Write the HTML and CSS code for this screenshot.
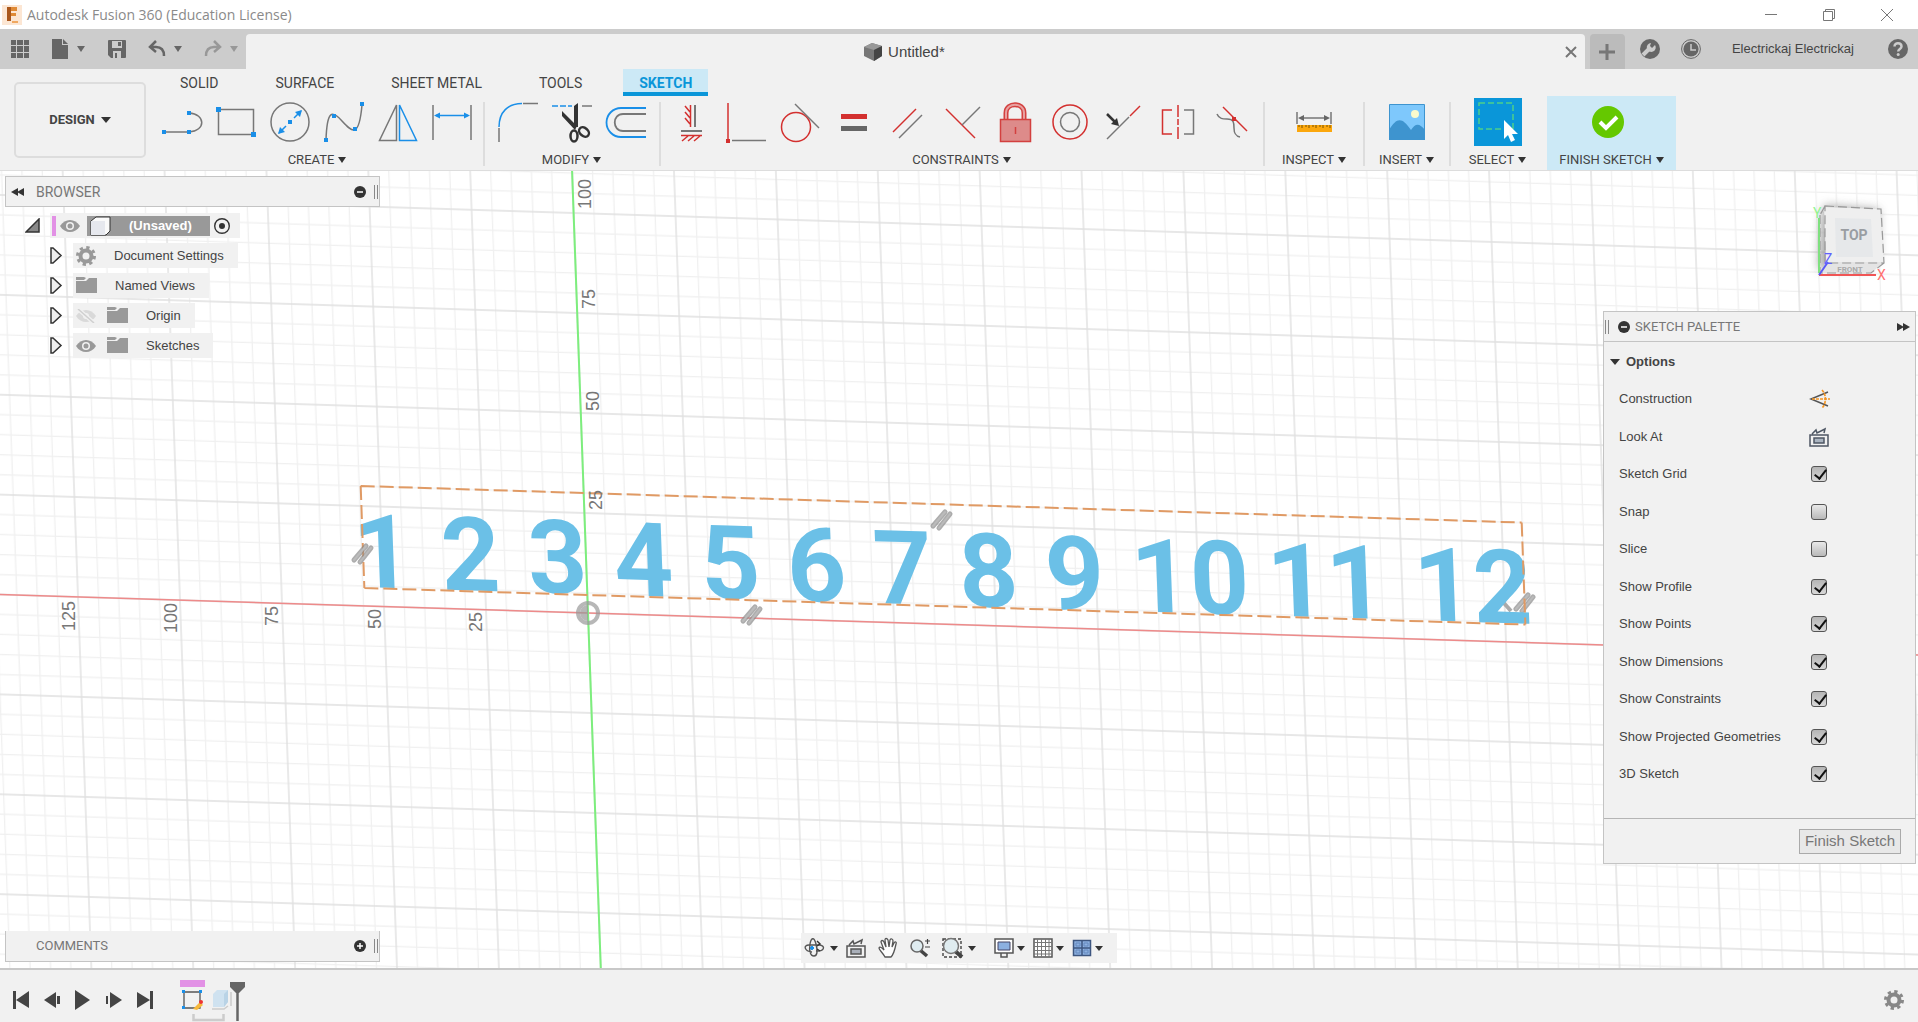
FILE: index.html
```html
<!DOCTYPE html>
<html lang="en">
<head>
<meta charset="utf-8">
<title>Autodesk Fusion 360 (Education License)</title>
<link rel="stylesheet" href="styles.css">
</head>
<body>
<header class="titlebar">
  <svg class="app-logo" width="20" height="20" viewBox="0 0 20 20"><rect width="20" height="20" fill="#fce6d3"/><path d="M5 2h10v4H9v2h5v3H9v5H5z" fill="#e08a35"/><path d="M5 2h4v14H5z" fill="#a9561b"/><path d="M10 17h6" stroke="#f0a860" stroke-width="2"/></svg>
  <h1 class="app-title">Autodesk Fusion 360 (Education License)</h1>
  <div class="window-buttons">
    <button class="bare" aria-label="Minimize"><svg width="14" height="14"><path d="M1 6.500h12" stroke="#777"/></svg></button>
    <button class="bare" aria-label="Restore"><svg width="14" height="14" fill="none" stroke="#777"><path d="M1.500 3.500h9v9h-9zM3.500 3V1.500h9v9H11"/></svg></button>
    <button class="bare" aria-label="Close window"><svg width="14" height="14"><path d="M1 1l12 12M13 1L1 13" stroke="#777"/></svg></button>
  </div>
</header>

<nav class="appbar" aria-label="Application bar">
  <div class="quick">
    <button class="bare" aria-label="Data panel"><svg width="18" height="18" fill="#666"><path d="M0 0h5v5H0zM6 0h6v5H6zM13 0h5v5h-5zM0 6h5v6H0zM6 6h6v6H6zM13 6h5v6h-5zM0 13h5v5H0zM6 13h6v5H6zM13 13h5v5h-5z"/></svg></button>
    <button class="bare menu" aria-label="File"><svg width="18" height="20"><path d="M1 0h10v6h6v14H1z" fill="#666"/><path d="M12 0l5 5h-5z" fill="#666"/></svg><i class="caret"></i></button>
    <button class="bare" aria-label="Save"><svg width="18" height="18" fill="#666"><path d="M0 1a1 1 0 0 1 1-1h16a1 1 0 0 1 1 1v16a1 1 0 0 1-1 1H3l-3-3z"/><path d="M4 1h10v7H4zM5 11h8v7H5z" fill="#ccc"/><path d="M10 2h3v4h-3zM7 13h2v5H7z"/></svg></button>
    <button class="bare menu" aria-label="Undo"><svg width="18" height="18" fill="none" stroke="#666" stroke-width="2.500"><path d="M8 1L2 7l6 5M2 7h6c5 0 8 3 8 9"/></svg><i class="caret"></i></button>
    <button class="bare menu faded" aria-label="Redo"><svg width="18" height="18" fill="none" stroke="#666" stroke-width="2.500"><path d="M10 1l6 6-6 5M16 7h-6c-5 0-8 3-8 9"/></svg><i class="caret"></i></button>
  </div>
  <div class="doc-tab">
    <span class="doc-name"><svg width="18" height="18"><path d="M0 4l8-4 10 3v10l-8 5-10-5z" fill="#777"/><path d="M0 4l8-4 10 3-8 4z" fill="#999"/><path d="M10 7l8-4v10l-8 5z" fill="#444"/></svg>Untitled*</span>
    <button class="bare" aria-label="Close tab"><svg width="12" height="12"><path d="M1 1l10 10M11 1L1 11" stroke="#777" stroke-width="2"/></svg></button>
  </div>
  <button class="new-tab" aria-label="New tab"><svg width="16" height="16"><path d="M8 0v16M0 8h16" stroke="#777" stroke-width="3"/></svg></button>
  <div class="account">
    <button class="bare" aria-label="Extensions"><svg width="20" height="20"><circle cx="10" cy="10" r="10" fill="#666"/><path d="M3 16l6-6" stroke="#ccc" stroke-width="4"/><path d="M15 6a4.500 4.500 0 1 1-4-2l-1 3 2 2z" fill="#ccc"/></svg></button>
    <button class="bare" aria-label="Job status"><svg width="20" height="20"><circle cx="10" cy="10" r="9.400" fill="none" stroke="#666"/><circle cx="10" cy="10" r="7.600" fill="#666"/><path d="M10 5v6h5" fill="none" stroke="#ccc" stroke-width="1.500"/></svg></button>
    <button class="bare user">Electrickaj Electrickaj</button>
    <button class="bare" aria-label="Help"><svg width="20" height="20"><circle cx="10" cy="10" r="10" fill="#666"/><path d="M6.500 7.500C6.500 3 13.500 3.500 13.500 7.500c0 2.500-3.300 2.500-3.300 5" fill="none" stroke="#ccc" stroke-width="2.500"/><circle cx="10.200" cy="15.500" r="1.500" fill="#ccc"/></svg></button>
  </div>
</nav>

<section class="ribbon" aria-label="Ribbon">
  <button class="workspace">DESIGN <i class="caret"></i></button>
  <div class="ribbon-main">
    <div class="tabs">
      <button class="tab">SOLID</button><button class="tab">SURFACE</button><button class="tab">SHEET METAL</button><button class="tab">TOOLS</button><button class="tab active">SKETCH</button>
    </div>
    <div class="groups">
      <div class="group create">
        <div class="icons">
          <button class="tool" aria-label="Line"><svg class="ic"><path d="M1 30h26c17-1 17-18 0-19" fill="none" stroke="#777" stroke-width="1.500"/><path d="M0 28h4v4H0zM25 28h4v4h-4zM25 9h4v4h-4z" fill="#1a8fe8"/></svg></button>
          <button class="tool" aria-label="Rectangle"><svg class="ic"><path d="M2.500 7.500h35v25h-35z" fill="none" stroke="#777" stroke-width="1.500"/><path d="M0 5h5v5H0zM35 30h5v5h-5z" fill="#1a8fe8"/></svg></button>
          <button class="tool" aria-label="Circle"><svg class="ic"><circle cx="20" cy="20" r="19" fill="none" stroke="#777" stroke-width="1.500"/><path d="M9 31l7-7M24 16l7-7" stroke="#1a8fe8" stroke-width="1.500"/><path d="M18 18h4v4h-4zM32 8l-2 7-5-5zM8 32l2-7 5 5z" fill="#1a8fe8"/></svg></button>
          <button class="tool" aria-label="Spline"><svg class="ic"><path d="M2 38C3 8 8 8 18 19s17 18 20-16" fill="none" stroke="#777" stroke-width="1.500"/><path d="M0 36h4v4H0zM8 12h4v4H8zM29 25h4v4h-4zM36 0h4v4h-4z" fill="#1a8fe8"/></svg></button>
          <button class="tool" aria-label="Mirror"><svg class="ic" fill="none" stroke-width="1.500"><path d="M18.500 3v35.500H1.500z" stroke="#777"/><path d="M21.500 3v35.500h17z" stroke="#1a8fe8"/></svg></button>
          <button class="tool" aria-label="Sketch Dimension"><svg class="ic"><path d="M1 3v35M39 3v35" stroke="#777" stroke-width="1.500"/><path d="M4 13.500h32" stroke="#1a8fe8" stroke-width="1.500"/><path d="M2 13.500l6-3v6zM38 13.500l-6-3v6z" fill="#1a8fe8"/></svg></button>
        </div>
        <button class="group-label">CREATE <i class="caret"></i></button>
      </div>
      <div class="group modify">
        <div class="icons">
          <button class="tool" aria-label="Fillet"><svg class="ic" fill="none" stroke-width="1.500"><path d="M1 25C1 10 10 1.500 24 1.500" stroke="#1a8fe8"/><path d="M25 1.500h15M1 26v14" stroke="#777"/></svg></button>
          <button class="tool" aria-label="Trim"><svg class="ic"><path d="M0 4h20" stroke="#1a8fe8" stroke-width="1.500" stroke-dasharray="6 2"/><path d="M30 4h10" stroke="#777" stroke-width="1.500"/><path d="M22 4l4-3v24h-4zM10 9l15 15-2 4-13-14z" fill="#333"/><ellipse cx="22" cy="34" rx="3.500" ry="5.500" fill="none" stroke="#333" stroke-width="2.500"/><ellipse cx="32" cy="30" rx="4" ry="5.500" transform="rotate(-50 32 30)" fill="none" stroke="#333" stroke-width="2.500"/></svg></button>
          <button class="tool" aria-label="Offset"><svg class="ic" fill="none" stroke-width="1.800"><path d="M40 6H15a14 14 0 0 0 0 29h25" stroke="#1a8fe8"/><path d="M40 12H17c-11 0-11 17 0 17h23" stroke="#777"/></svg></button>
        </div>
        <button class="group-label">MODIFY <i class="caret"></i></button>
      </div>
      <div class="group constraints">
        <div class="icons">
          <button class="tool" aria-label="Horizontal/Vertical"><svg class="ic" fill="none" stroke="#d3302f" stroke-width="1.500"><path d="M18.500 3v22M13 4l5 6M13 10l5 6M13 16l5 6M9 33.500h21M16 34l-6 5M22 34l-6 5M28 34l-6 5"/><path d="M23 3v22M9 29h21" stroke="#777" stroke-width="2"/></svg></button>
          <button class="tool" aria-label="Coincident"><svg class="ic"><path d="M2 1v36" stroke="#d3302f" stroke-width="1.500"/><path d="M6 38.500h34" stroke="#777" stroke-width="1.500"/><path d="M0 37h4v4H0z" fill="#d3302f"/></svg></button>
          <button class="tool" aria-label="Tangent"><svg class="ic" fill="none"><circle cx="16" cy="25" r="14.500" stroke="#d3302f" stroke-width="1.500"/><path d="M15 2l24 24" stroke="#777" stroke-width="1.500"/></svg></button>
          <button class="tool" aria-label="Equal"><svg class="ic"><path d="M7 12h26v5H7z" fill="#d3302f"/><path d="M7 24h26v5H7z" fill="#666"/></svg></button>
          <button class="tool" aria-label="Parallel"><svg class="ic" stroke-width="1.500"><path d="M5 30L28 7" stroke="#d3302f"/><path d="M11 36l23-23" stroke="#777"/></svg></button>
          <button class="tool" aria-label="Perpendicular"><svg class="ic" stroke-width="1.500"><path d="M4 7l29 29" stroke="#d3302f"/><path d="M20 23L38 5" stroke="#777"/></svg></button>
          <button class="tool" aria-label="Fix"><svg class="ic" fill="none" stroke="#d3403f"><path d="M10 17v-6c0-11 18-11 18 0v6" stroke-width="5"/><path d="M10 17v-6c0-11 18-11 18 0v6" stroke="#e8a0a0" stroke-width="2"/><path d="M4.500 17.500h30v22h-30z" fill="#dd8b8a" stroke-width="1.500"/><path d="M19.500 25v7" stroke-width="1.500"/></svg></button>
          <button class="tool" aria-label="Concentric"><svg class="ic" fill="none" stroke-width="1.500"><circle cx="20" cy="20" r="17" stroke="#d3302f"/><circle cx="20" cy="20" r="9.500" stroke="#777"/></svg></button>
          <button class="tool" aria-label="Collinear"><svg class="ic"><path d="M3 37l22-22" stroke="#777" stroke-width="1.500"/><path d="M26 14L36 4" stroke="#d3302f" stroke-width="1.500"/><path d="M3 12l8 8" stroke="#333" stroke-width="2.500"/><path d="M15 24l-2-8-6 6z" fill="#333"/></svg></button>
          <button class="tool" aria-label="Symmetry"><svg class="ic" fill="none" stroke="#d3302f" stroke-width="1.500"><path d="M14 8H4.500v24H14"/><path d="M20 3v12M20 17v6M20 25v12"/><path d="M26 8h9.500v24H26" stroke="#777"/></svg></button>
          <button class="tool" aria-label="Curvature"><svg class="ic" fill="none"><path d="M5 12c2 5 6 5 10 5 7 0 7 4 7 9 0 6 2 8 6 9" stroke="#777" stroke-width="1.500"/><path d="M11 5l24 24" stroke="#d3302f" stroke-width="1.500"/><path d="M20 15h4v4h-4z" fill="#d3302f"/></svg></button>
        </div>
        <button class="group-label">CONSTRAINTS <i class="caret"></i></button>
      </div>
      <div class="group inspect">
        <div class="icons"><button class="tool" aria-label="Measure"><svg class="ic"><path d="M3 10v12M37 10v12M6 16h28" stroke="#777" stroke-width="1.500"/><path d="M4 16l6-3v6zM36 16l-6-3v6z" fill="#666"/><path d="M3 23h35v7H3z" fill="#fba70d"/><path d="M5 23v2M8 23v3M12 23v2M15 23v3M19 23v2M22 23v3M26 23v2M29 23v3M33 23v2M36 23v3" stroke="#7a5200"/></svg></button></div>
        <button class="group-label">INSPECT <i class="caret"></i></button>
      </div>
      <div class="group insert">
        <div class="icons"><button class="tool" aria-label="Insert image"><svg class="ic"><path d="M2.500 2.500h35v35h-35z" fill="#7ec8fc" stroke="#3e94cf"/><path d="M2 28c8-13 13-13 22 0 5-8 9-6 14 0v10H2z" fill="#3e94cf"/><circle cx="28" cy="12" r="4" fill="#fbfbcd"/></svg></button></div>
        <button class="group-label">INSERT <i class="caret"></i></button>
      </div>
      <div class="group select">
        <div class="icons"><button class="tool selected" aria-label="Select"><svg width="48" height="48"><path d="M5 5h34v26H5z" fill="none" stroke="#4ed08a" stroke-width="1.500" stroke-dasharray="6 3"/><path d="M30 22v19l4-4 3 7 4-2-3-6h6z" fill="#fff"/></svg></button></div>
        <button class="group-label">SELECT <i class="caret"></i></button>
      </div>
      <div class="group finish">
        <div class="icons"><button class="tool" aria-label="Finish"><svg class="ic"><circle cx="20" cy="20" r="16" fill="#65c800"/><path d="M12 20l6 6 11-11" fill="none" stroke="#fff" stroke-width="4"/></svg></button></div>
        <button class="group-label">FINISH SKETCH <i class="caret"></i></button>
      </div>
    </div>
  </div>
</section>

<main class="viewport">
  <svg class="scene" aria-label="Sketch canvas">
    <defs>
      <pattern id="grid" width="102" height="100" patternUnits="userSpaceOnUse">
        <path d="M20.400 0v100M40.800 0v100M61.200 0v100M81.600 0v100M0 20h102M0 40h102M0 60h102M0 80h102" stroke="#f0f0f0" stroke-width="1.300"/>
        <path d="M0 0v100M102 0v100M0 0h102M0 100h102" stroke="#e0e0e0" stroke-width="1.400"/>
      </pattern>
      <g id="parallel"><path d="M-8 6L4 -8M-2 8L9 -6" stroke="#8a8a8a" stroke-opacity=".7" stroke-width="5" stroke-linecap="round"/><path d="M-8 6L4 -8M-2 8L9 -6" stroke="#bbb" stroke-width="2" stroke-linecap="round"/></g>
    </defs>
    <g transform="matrix(1 .0315 .036 1 588 442)">
      <rect x="-800" y="-600" width="4000" height="3000" fill="url(#grid)"/>
      <path d="M-700 0H3000" stroke="#ee8a8a" stroke-width="1.500"/>
      <path d="M0 -600V2000" stroke="#7dee7d" stroke-width="2"/>
    </g>
    <use href="#parallel" x="1524" y="432"/><path d="M1503 431l8 9" stroke="#aaa" stroke-width="4"/>
    <g transform="matrix(1 .0315 .036 1 588 442)">
      <g class="numbers">
        <text x="-174" y="-19">1</text><text x="-86" y="-19">2</text><text x="1" y="-19">3</text><text x="87" y="-19">4</text><text x="174" y="-19">5</text><text x="260" y="-19">6</text><text x="346" y="-19">7</text><text x="432" y="-19">8</text><text x="518" y="-19">9</text><text x="663" y="-19">10</text><text x="799" y="-19">11</text><text x="946" y="-19">12</text>
      </g>
      <path d="M-223 -120H938M-223 -18H938M-223 -120V-18M938 -120V-18" fill="none" stroke="#e09a64" stroke-width="2" stroke-dasharray="14 5"/>
    </g>
    <g class="axis">
      <text transform="translate(75 445) rotate(-90)">125</text><text transform="translate(177 447) rotate(-90)">100</text><text transform="translate(278 445) rotate(-90)">75</text><text transform="translate(381 448) rotate(-90)">50</text><text transform="translate(482 451) rotate(-90)">25</text>
      <text transform="translate(602 329) rotate(-90)">25</text><text transform="translate(599 230) rotate(-90)">50</text><text transform="translate(595 128) rotate(-90)">75</text><text transform="translate(591 23) rotate(-90)">100</text>
    </g>
    <circle cx="588" cy="442" r="10" fill="none" stroke="#999" stroke-opacity=".7" stroke-width="4"/><path d="M588 434a8 8 0 0 0 0 16z" fill="#999" fill-opacity=".7"/>
    <use href="#parallel" x="362" y="383"/><use href="#parallel" x="941" y="349"/><use href="#parallel" x="751" y="444"/>
  </svg>

  <svg class="cube" width="80" height="84" aria-label="View cube">
    <path d="M9 15L6 68l50 1 11-13V8L13 4z" fill="#8a8a8a" opacity=".7" class="cube-shadow"/>
    <path d="M12 6l56 2 4 54-58-1z" fill="#efefef"/><path d="M14 61h58l-13 11-50-1z" fill="#e4e4e4"/><path d="M23 17l36 1 2 38H24z" fill="#e6e8ea"/>
    <path d="M13 5l56 3 3 54H13zM13 5L8 14M8 14v58h51l13-10" fill="none" stroke="#999" stroke-width="1.200" stroke-dasharray="9 4"/>
    <path d="M7 17v55" stroke="#7fe07f" stroke-width="2"/><path d="M7 74h57" stroke="#f05555" stroke-width="2"/><path d="M7 74l9-13" stroke="#5a5af5" stroke-width="2"/>
    <text class="face" x="42" y="39">TOP</text><text class="front" x="38" y="71">FRONT</text>
    <text class="ax" x="1" y="17" fill="#90f590">Y</text><text class="ax" x="65" y="79" fill="#ff7070">X</text><text class="ax" x="12" y="63" fill="#6060ff">Z</text>
  </svg>

  <div class="left-column">
    <section class="browser">
      <header class="panel-head"><button class="bare" aria-label="Collapse browser"><svg width="14" height="8"><path d="M0 4l7-4v8zM6 4l7-4v8z" fill="#333"/></svg></button><h2>BROWSER</h2><button class="bare" aria-label="Hide"><svg class="dot"><circle cx="6" cy="6" r="6" fill="#333"/><path d="M3 6h6" stroke="#fff" stroke-width="1.500"/></svg></button><i class="grip"></i></header>
      <ul class="tree">
        <li class="root"><svg width="16" height="16"><path d="M1 14L14 1v13z" fill="#888" stroke="#333" stroke-width="1.500"/></svg>
          <div class="node"><i class="mark"></i><svg class="eye"><path d="M0 7c5-8 15-8 20 0-5 8-15 8-20 0z" fill="#999"/><circle cx="10" cy="7" r="4" fill="#f1f1f1"/><circle cx="10" cy="7" r="2.500" fill="#999"/></svg><span class="doc"><svg width="22" height="20"><path d="M1 5l5-4h14v14l-4 4H1z" fill="#fafafa" stroke="#333"/><path d="M1 5h14v14H1z" fill="#e6e8ee"/></svg>(Unsaved)</span><svg width="16" height="16"><circle cx="8" cy="8" r="7.300" fill="none" stroke="#333" stroke-width="1.400"/><circle cx="8" cy="8" r="3" fill="#333"/></svg></div></li>
        <li><svg class="twist"><path d="M1 1v15h2l8-7.500L3 1z" fill="#eee" stroke="#333" stroke-width="1.500"/></svg><div class="node"><svg class="gear" viewBox="0 0 20 20"><circle cx="10" cy="10" r="5.500" fill="none" stroke="#999" stroke-width="4"/><circle cx="10" cy="10" r="8.500" fill="none" stroke="#999" stroke-width="3" stroke-dasharray="3.300 3.375"/></svg><span>Document Settings</span></div></li>
        <li><svg class="twist"><path d="M1 1v15h2l8-7.500L3 1z" fill="#eee" stroke="#333" stroke-width="1.500"/></svg><div class="node"><svg class="folder"><path d="M0 0h8l2 1-2 2H0zM0 4h10l3-3h8v15H0z" fill="#999"/></svg><span>Named Views</span></div></li>
        <li><svg class="twist"><path d="M1 1v15h2l8-7.500L3 1z" fill="#eee" stroke="#333" stroke-width="1.500"/></svg><div class="node"><svg class="eye"><path d="M0 7c5-8 15-8 20 0-5 8-15 8-20 0z" fill="#d9d9d9"/><circle cx="10" cy="7" r="3" fill="#f1f1f1"/><path d="M2 0l16 14" stroke="#f1f1f1" stroke-width="4"/><path d="M2 0l16 14" stroke="#d0d0d0" stroke-width="1.500"/></svg><svg class="folder second"><path d="M0 0h8l2 1-2 2H0zM0 4h10l3-3h8v15H0z" fill="#999"/></svg><span>Origin</span></div></li>
        <li><svg class="twist"><path d="M1 1v15h2l8-7.500L3 1z" fill="#eee" stroke="#333" stroke-width="1.500"/></svg><div class="node"><svg class="eye"><path d="M0 7c5-8 15-8 20 0-5 8-15 8-20 0z" fill="#999"/><circle cx="10" cy="7" r="4" fill="#f1f1f1"/><circle cx="10" cy="7" r="2.500" fill="#999"/></svg><svg class="folder second"><path d="M0 0h8l2 1-2 2H0zM0 4h10l3-3h8v15H0z" fill="#999"/></svg><span>Sketches</span></div></li>
      </ul>
    </section>
    <section class="panel-head comments"><h2>COMMENTS</h2><button class="bare" aria-label="Add comment"><svg class="dot"><circle cx="6" cy="6" r="6" fill="#333"/><path d="M3 6h6M6 3v6" stroke="#fff" stroke-width="1.500"/></svg></button><i class="grip"></i></section>
  </div>

  <nav class="navbar" aria-label="Navigation">
    <button class="bare menu" aria-label="Orbit"><svg class="nav" fill="none" stroke="#555" stroke-width="1.400"><path d="M8 14C0 13-1 7 5 7h11c6 1 4 7-4 6M10 18C6 18 5 12 6 6s4-8 6 0 1 12-2 12"/><path d="M6 10h4M8 8v4" stroke="#1a8fe8" stroke-width="2"/><path d="M13 3l3 3-3 2M16 13l-3-2" stroke="#333"/></svg><i class="caret"></i></button>
    <button class="bare look" aria-label="Look At"><svg class="nav" fill="none" stroke="#555" stroke-width="1.500"><path d="M1 8h18v11H1zM3 7l4-4 1 3 8-4-1 4" /><path d="M5 11h10v5H5z" fill="#aab0ba"/></svg></button>
    <button class="bare" aria-label="Pan"><svg class="nav"><path d="M7 19C5 15 1 12 1 10c1-2 3 0 5 2L3 4c0-2 2-2 3 0l2 5-1-7c0-2 2-2 3 0l1 7 1-7c1-2 3-1 3 1l-1 6 2-4c1-2 3-1 2 1-1 5-2 10-5 13z" fill="#fdfdfd" stroke="#555" stroke-width="1.300"/></svg></button>
    <button class="bare" aria-label="Zoom"><svg class="nav" fill="none"><path d="M10 12l7 6" stroke="#444" stroke-width="3.500"/><circle cx="7" cy="8" r="6" fill="#dfecf0" stroke="#666" stroke-width="1.500"/><path d="M15 3h5M17.500 1v5M15 9h5" stroke="#444" stroke-width="1.200"/></svg></button>
    <button class="bare menu" aria-label="Fit"><svg class="nav" fill="none"><path d="M1 1h18v18H1z" stroke="#444" stroke-width="1.400" stroke-dasharray="3 2"/><path d="M13 13l7 6" stroke="#444" stroke-width="4"/><circle cx="9" cy="8" r="7.500" fill="#dfecf0" stroke="#777" stroke-width="1.500"/></svg><i class="caret"></i></button>
    <div class="display">
      <button class="bare menu" aria-label="Display settings"><svg class="nav" fill="none"><path d="M1 1h18v14H1z" fill="#fff" stroke="#555" stroke-width="1.500"/><path d="M4 4h12v8H4z" fill="#8cb0e0" stroke="#446"/><path d="M7 15v4h6v-4" stroke="#555" stroke-width="1.500"/></svg><i class="caret"></i></button>
      <button class="bare menu" aria-label="Grid and snaps"><svg class="nav" fill="none"><path d="M1 1h18v18H1z" fill="#fff" stroke="#555" stroke-width="1.500"/><path d="M4.500 1v18M8.500 1v18M12.500 1v18M16 1v18M1 4.500h18M1 8.500h18M1 12.500h18M1 16h18" stroke="#777"/></svg><i class="caret"></i></button>
      <button class="bare menu" aria-label="Viewports"><svg class="nav"><path d="M1.500 2.500h17v15h-17zM10 2v16M1 10h18" fill="#8cb0e0" stroke="#3d5680" stroke-width="1.500"/><path d="M4 5h4v3H4zM12 5h4v3h-4zM4 12h4v3H4zM12 12h4v3h-4z" fill="none" stroke="#6488bd"/></svg><i class="caret"></i></button>
    </div>
  </nav>

  <aside class="palette">
    <header class="palette-head"><i class="grip flip"></i><button class="bare" aria-label="Minimize palette"><svg class="dot"><circle cx="6" cy="6" r="6" fill="#333"/><path d="M3 6h6" stroke="#fff" stroke-width="1.500"/></svg></button><h2>SKETCH PALETTE</h2><button class="bare" aria-label="Dock palette"><svg width="14" height="8"><path d="M0 0l7 4-7 4zM6 0l7 4-7 4z" fill="#333"/></svg></button></header>
    <div class="rows">
      <button class="bare options"><i class="caret"></i>Options</button>
      <div class="row"><span>Construction</span><button class="bare" aria-label="Construction"><svg class="nav" fill="none"><path d="M19 3L2 10l17 7" stroke="#555" stroke-width="1.500"/><path d="M3 10h18M13 1c4 4 5 13 0 18" stroke="#f59522" stroke-width="1.700" stroke-dasharray="3 1"/></svg></button></div>
      <div class="row"><span>Look At</span><button class="bare" aria-label="Look at sketch"><svg class="nav" fill="none" stroke="#4d5663" stroke-width="1.500"><path d="M1 8h18v11H1zM3 7l4-4 1 3 8-4-1 4" /><path d="M5 11h10v5H5z" fill="#aab4c0"/></svg></button></div>
      <label class="row">Sketch Grid<input type="checkbox" checked></label>
      <label class="row">Snap<input type="checkbox"></label>
      <label class="row">Slice<input type="checkbox"></label>
      <label class="row">Show Profile<input type="checkbox" checked></label>
      <label class="row">Show Points<input type="checkbox" checked></label>
      <label class="row">Show Dimensions<input type="checkbox" checked></label>
      <label class="row">Show Constraints<input type="checkbox" checked></label>
      <label class="row">Show Projected Geometries<input type="checkbox" checked></label>
      <label class="row">3D Sketch<input type="checkbox" checked></label>
    </div>
    <footer class="palette-foot"><button class="finish-btn">Finish Sketch</button></footer>
  </aside>
</main>

<footer class="timeline">
  <button class="bare" aria-label="Go to start"><svg class="play"><path d="M0 1h3v18H0zM16 1v17L3 10z"/></svg></button>
  <button class="bare" aria-label="Step back"><svg class="play"><path d="M0 10L12 2v16zM13 6h3v8h-3z"/></svg></button>
  <button class="bare" aria-label="Play"><svg class="play"><path d="M0 0l15 10L0 20z"/></svg></button>
  <button class="bare" aria-label="Step forward"><svg class="play"><path d="M0 6h2v8H0zM4 2l12 8-12 8z"/></svg></button>
  <button class="bare" aria-label="Go to end"><svg class="play"><path d="M0 2l13 8-13 8zM13 1h3v18h-3z"/></svg></button>
  <svg class="history" width="70" height="46" aria-label="Feature history"><path d="M0 4h25v7H0z" fill="#e291e5"/><path d="M4 16h16v16H4z" fill="none" stroke="#555" stroke-width="1.300"/><path d="M2 14h3v3H2zM19 14h3v3h-3zM2 30h3v3H2z" fill="#1a8fe8"/><path d="M13 33l7-7 3 3-6 5z" fill="#f6b83c"/><circle cx="21" cy="26" r="2" fill="#e33"/><path d="M33 18l4-4h11v12l-4 5H33z" fill="#cfe2f0"/><path d="M44 31V18l4-4v12z" fill="#b9d3e6"/><path d="M32 33h12l4-3M51 30V16" fill="none" stroke="#ccc" stroke-width="1.500"/><path d="M13.500 38v6h30v-6" fill="none" stroke="#ccc" stroke-width="2.500"/><path d="M50 6h15v5l-6 6h-3l-6-6z" fill="#666"/><path d="M57.500 12v33" stroke="#666" stroke-width="2.500"/></svg>
  <button class="bare settings" aria-label="Timeline settings"><svg class="gear" viewBox="0 0 20 20"><circle cx="10" cy="10" r="5.500" fill="none" stroke="#888" stroke-width="4"/><circle cx="10" cy="10" r="8.500" fill="none" stroke="#888" stroke-width="3" stroke-dasharray="3.300 3.375"/></svg></button>
</footer>
</body>
</html>
```
FILE: styles.css
```css
* { box-sizing: border-box; }
html, body { height: 100%; }
body {
  margin: 0;
  display: flex;
  flex-direction: column;
  overflow: hidden;
  background: #f1f1f1;
  color: #444;
  font: 13px/16px "Liberation Sans", Arial, sans-serif;
}
button { font: inherit; color: inherit; }
svg { display: block; flex: none; }
h1, h2 { margin: 0; font-weight: normal; }
.bare { border: 0; padding: 0; background: none; display: flex; align-items: center; }
.menu { gap: 8px; }
.caret { display: inline-block; border: 5px solid transparent; border-top: 6px solid #333; border-bottom: 0; }
.titlebar { flex: none; height: 29px; background: #fff; display: flex; align-items: center; padding: 0 23px 0 2px; gap: 5px; }
.app-title { font: 14px/20px "Open Sans", sans-serif; color: #8a8a8a; }
.window-buttons { margin-left: auto; display: flex; gap: 44px; padding-right: 1px; }

.appbar { flex: none; height: 40px; background: #ccc; display: flex; align-items: stretch; }
.quick { width: 246px; display: flex; align-items: center; justify-content: space-between; padding: 0 8px 0 11px; }
.quick .caret { border-width: 6px 4px 0; border-top-color: #666; }
.faded { opacity: .5; }
.doc-tab { flex: 1; margin-top: 5px; background: #f1f1f1; border-radius: 4px 4px 0 0; display: flex; align-items: center; padding: 0 8px; }
.doc-name { flex: 1; display: flex; align-items: center; justify-content: center; gap: 6px; padding-right: 10px; font-size: 15px; }
.new-tab { width: 35px; margin: 5px 0 0 5px; border: 0; border-radius: 4px 4px 0 0; background: #bbb; display: grid; place-items: center; padding: 0; }
.account { display: flex; align-items: center; gap: 21px; padding: 0 10px 0 15px; }
.user { margin: 0 13px 0 10px; }

.ribbon { flex: none; display: flex; height: 102px; border-bottom: 1px solid #ddd; font: 13px/16px Roboto, sans-serif; }
.workspace { width: 132px; height: 76px; margin: 13px 10px 0 14px; background: none; border: 2px solid #ddd; border-radius: 5px; font-weight: 700; display: flex; align-items: center; justify-content: center; gap: 6px; }
.ribbon-main { flex: 1; display: flex; flex-direction: column; }
.tabs { display: flex; height: 27px; gap: 25px; padding-left: 8px; }
.tab { border: 0; background: none; padding: 4px 16px 0; border-bottom: 4px solid transparent; font-size: 14px; }
.tab.active { background: #cce9f6; border-color: #0a96d9; color: #0a96d9; font-weight: 700; }
.groups { display: flex; flex: 1; }
.group { position: relative; display: flex; flex-direction: column; align-items: center; justify-content: space-between; padding-top: 2px; }
.group:nth-child(-n+5)::after { content: ""; position: absolute; right: 0; top: 6px; bottom: 4px; width: 2px; background: #ddd; }
.create { width: 329px; padding-right: 7px; }
.modify { width: 176px; padding-right: 3px; }
.constraints { width: 604px; padding-right: 3px; }
.inspect { width: 100px; padding-right: 2px; }
.insert { width: 86px; padding-right: 3px; }
.select { width: 96px; padding-right: 3px; }
.finish { width: 129px; background: #cce9f6; }
.finish .icons { padding-right: 8px; }
.icons { display: flex; }
.tool { width: 54px; height: 48px; padding: 0; border: 0; background: none; display: grid; place-items: center; }
.tool.selected { width: 48px; background: #0a96d9; }
.ic { width: 40px; height: 40px; overflow: visible; }
.group-label { border: 0; background: none; padding: 0; display: flex; align-items: center; gap: 4px; height: 20px; }
.group-label .caret { border-width: 6px 4px 0; }

.viewport { flex: 1; min-height: 0; position: relative; background: #fff; display: flex; justify-content: space-between; overflow: hidden; }
.scene { position: absolute; inset: 0; width: 100%; height: 100%; }
.numbers { font: bold 103px Roboto, sans-serif; fill: #6bc0e7; text-anchor: end; }
.axis text { font: 18px "Liberation Sans", Arial, sans-serif; fill: #777; text-anchor: middle; }
.cube { position: absolute; right: 26px; top: 30px; overflow: visible; }
.cube-shadow { filter: blur(5px); }
.face { font: bold 14px Roboto, sans-serif; fill: #999da2; text-anchor: middle; }
.front { font: bold 8px Roboto, sans-serif; fill: #aaa; text-anchor: middle; }
.ax { font: 14px Roboto, sans-serif; }

.left-column { position: relative; width: 375px; margin: 5px 0 6px 5px; display: flex; flex-direction: column; justify-content: space-between; }
.panel-head { height: 31px; background: #f1f1f1; border: 1px solid #c4c4c4; display: flex; align-items: center; padding: 0 1px 0 5px; color: #777; }
.panel-head h2 { margin: 0 auto 0 11px; font: 14px/16px Roboto, sans-serif; }
.comments { border-top: 0; }
.panel-head.comments h2 { margin-left: 25px; font-size: 13px; }
.dot { width: 12px; height: 12px; }
.grip { width: 4px; height: 14px; border: 1px solid #888; border-width: 0 1px; margin-left: 8px; }
.tree { list-style: none; margin: 6px 0 0; padding: 0; display: flex; flex-direction: column; gap: 5px; }
.tree li { display: flex; align-items: center; height: 25px; padding-left: 45px; gap: 10px; }
.tree .root { padding-left: 20px; gap: 9px; }
.node { height: 25px; background: #f1f1f1; display: flex; align-items: center; padding: 0 14px 0 3px; gap: 18px; }
.root .node { padding: 0 10px 0 2px; gap: 4px; }
.mark { width: 4px; height: 20px; background: #e291e5; }
.eye { width: 20px; height: 14px; }
.second { margin-left: -7px; }
.folder { width: 21px; height: 17px; }
.gear { width: 20px; height: 20px; }
.twist { width: 13px; height: 18px; }
.doc { display: flex; align-items: center; gap: 17px; width: 123px; height: 20px; margin-left: 3px; padding-left: 3px; background: #999; color: #fff; font-weight: bold; }

.navbar { position: absolute; left: 50%; bottom: 5px; width: 316px; height: 30px; margin-left: -158px; background: #f1f1f1; display: flex; align-items: center; gap: 12px; padding-left: 3px; }
.navbar .menu { gap: 6px; }
.navbar .caret { border-width: 5px 4px 0; }
.navbar .look { margin-left: -4px; }
.display { display: flex; gap: 8px; margin-left: 6px; }
.navbar .display .menu { gap: 3px; }
.nav { width: 20px; height: 20px; overflow: visible; }

.palette { position: relative; align-self: flex-start; width: 313px; margin: 140px 2px 0 0; background: #f1f1f1; border: 1px solid #c4c4c4; }
.palette-head { height: 30px; border-bottom: 1px solid #c4c4c4; display: flex; align-items: center; padding: 0 4px 0 1px; }
.palette-head h2 { margin: 0 auto 0 5px; font: 13px/16px Roboto, sans-serif; color: #777; }
.flip { margin: 0 9px 0 0; }
.rows { height: 476px; padding: 1px 15px 25px; display: grid; grid-auto-rows: 1fr; }
.options { font-weight: bold; gap: 6px; margin-left: -9px; }
.row { display: grid; grid-template-columns: 190px 1fr; align-items: center; }
.row input { appearance: none; width: 16px; height: 16px; margin: 0 0 0 2px; border: 1px solid #555; border-radius: 3px; background: linear-gradient(#e9e9e9, #b9b9b9); }
.row input:checked { background: linear-gradient(#b5b5b5, #d8d8d8); position: relative; }
.row input:checked::after { content: ""; position: absolute; left: 5px; top: 0; width: 5px; height: 10px; border: solid #111; border-width: 0 2px 2px 0; transform: rotate(38deg); }
.palette-foot { height: 45px; border-top: 1px solid #b5b5b5; display: flex; align-items: center; justify-content: flex-end; padding-right: 14px; }
.finish-btn { height: 25px; padding: 0 5px; border: 1px solid #aaa; background: #e8e8e8; color: #777; font-size: 15px; }

.timeline { flex: none; height: 54px; border-top: 2px solid #c8c8c8; display: flex; align-items: center; gap: 15px; padding: 8px 14px 0 13px; }
.play { width: 16px; height: 20px; fill: #444; }
.history { margin: -2px 0 0 12px; }
.settings { margin-left: auto; }
```
